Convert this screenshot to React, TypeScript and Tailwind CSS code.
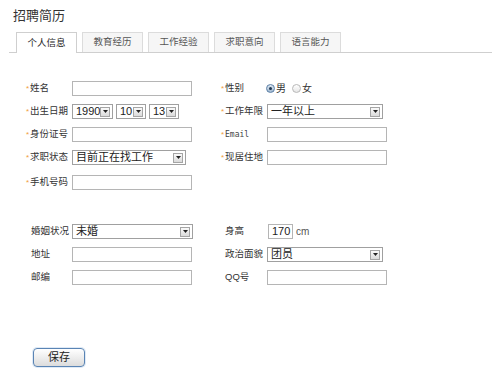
import React from "react";

const font = `font-["Liberation_Sans","Noto_Sans_CJK_SC",sans-serif]`;

const Star = ({ show = true }: { show?: boolean }) => (
  <span
    className={`w-[4px] text-[8px] leading-none text-[#f0a040] ${show ? "" : "invisible"}`}
  >
    *
  </span>
);

const Label = ({
  text,
  star = true,
  width,
  small = false,
}: {
  text: string;
  star?: boolean;
  width: string;
  small?: boolean;
}) => (
  <div className={`flex items-center shrink-0 ${width}`}>
    <Star show={star} />
    <span
      className={
        small
          ? `text-[8px] text-[#444] font-["DejaVu_Sans_Mono",monospace]`
          : "text-[9.5px] text-[#333]"
      }
    >
      {text}
    </span>
  </div>
);

const TextInput = ({ width = "w-[120px]", value }: { width?: string; value?: string }) => (
  <div
    className={`${width} h-[15px] border border-[#b5b5b5] bg-white text-[11px] leading-[13px] pl-[3px] text-[#222]`}
  >
    {value}
  </div>
);

const Select = ({ width, value }: { width: string; value: string }) => (
  <div
    className={`${width} h-[15px] border border-[#a0a0a0] bg-white flex items-center justify-between pl-[3px] pr-[2px]`}
  >
    <span className="text-[11px] leading-none text-[#222]">{value}</span>
    <span className="w-[10px] h-[10px] border border-[#a5a5a5] bg-gradient-to-b from-[#fafafa] to-[#dadada] flex items-center justify-center">
      <svg width="5" height="3" viewBox="0 0 5 3">
        <path d="M0 0h5L2.5 3z" fill="#222" />
      </svg>
    </span>
  </div>
);

const Radio = ({ checked }: { checked?: boolean }) => (
  <span
    className={`w-[9px] h-[9px] rounded-full border flex items-center justify-center ${
      checked
        ? "border-[#5b7fa6] bg-gradient-to-b from-[#dfe9f3] to-[#9fb7cf]"
        : "border-[#b8b8b8] bg-gradient-to-b from-[#ffffff] to-[#e6e6e6]"
    }`}
  >
    {checked && <span className="w-[3px] h-[3px] rounded-full bg-[#1f3550]" />}
  </span>
);

const tabs = ["个人信息", "教育经历", "工作经验", "求职意向", "语言能力"];

export default function App() {
  return (
    <div className={`w-[492px] h-[370px] bg-white overflow-hidden ${font}`}>
      {/* Title */}
      <div className="pt-[8px] pl-[13px] h-[24px] text-[13px] leading-[15px] text-[#333]">
        招聘简历
      </div>

      {/* Tabs */}
      <div className="mt-[8px] ml-[9px] h-[21px] border-b border-[#cfcfcf] flex items-end gap-[5px] pl-[7px]">
        {tabs.map((t, i) => (
          <div
            key={t}
            className={`w-[61px] h-[20px] border border-b-0 flex items-center justify-center text-[9.5px] ${
              i === 0
                ? "border-[#cfcfcf] bg-white text-[#222] h-[21px] mb-[-1px]"
                : "border-[#dcdcdc] bg-[#f6f6f6] text-[#555]"
            }`}
          >
            {t}
          </div>
        ))}
      </div>

      {/* Required fields */}
      <div className="mt-[24px] pl-[26px] flex flex-col">
        <div className="flex items-center h-[23px]">
          <div className="w-[195px] flex items-center">
            <Label text="姓名" width="w-[46px]" />
            <TextInput />
          </div>
          <div className="flex items-center">
            <Label text="性别" width="w-[45px]" />
            <div className="flex items-center gap-[1px] text-[10px] text-[#333]">
              <Radio checked />
              <span className="mr-[5px]">男</span>
              <Radio />
              <span>女</span>
            </div>
          </div>
        </div>

        <div className="flex items-center h-[23px]">
          <div className="w-[195px] flex items-center">
            <Label text="出生日期" width="w-[46px]" />
            <div className="flex items-center gap-[3px]">
              <Select width="w-[41px]" value="1990" />
              <Select width="w-[30px]" value="10" />
              <Select width="w-[30px]" value="13" />
            </div>
          </div>
          <div className="flex items-center">
            <Label text="工作年限" width="w-[46px]" />
            <Select width="w-[116px]" value="一年以上" />
          </div>
        </div>

        <div className="flex items-center h-[23px]">
          <div className="w-[195px] flex items-center">
            <Label text="身份证号" width="w-[46px]" />
            <TextInput />
          </div>
          <div className="flex items-center">
            <Label text="Email" width="w-[46px]" small />
            <TextInput />
          </div>
        </div>

        <div className="flex items-center h-[23px]">
          <div className="w-[195px] flex items-center">
            <Label text="求职状态" width="w-[46px]" />
            <Select width="w-[114px]" value="目前正在找工作" />
          </div>
          <div className="flex items-center">
            <Label text="现居住地" width="w-[46px]" />
            <TextInput />
          </div>
        </div>

        <div className="flex items-center h-[23px] mt-[2px]">
          <div className="w-[195px] flex items-center">
            <Label text="手机号码" width="w-[46px]" />
            <TextInput />
          </div>
        </div>
      </div>

      {/* Optional fields */}
      <div className="mt-[26px] pl-[27px] flex flex-col">
        <div className="flex items-center h-[23px]">
          <div className="w-[194px] flex items-center">
            <Label text="婚姻状况" star={false} width="w-[45px]" />
            <Select width="w-[121px]" value="未婚" />
          </div>
          <div className="flex items-center">
            <Label text="身高" star={false} width="w-[47px]" />
            <TextInput width="w-[25px]" value="170" />
            <span className="ml-[3px] text-[10px] text-[#555]">cm</span>
          </div>
        </div>

        <div className="flex items-center h-[23px]">
          <div className="w-[194px] flex items-center">
            <Label text="地址" star={false} width="w-[45px]" />
            <TextInput />
          </div>
          <div className="flex items-center">
            <Label text="政治面貌" star={false} width="w-[46px]" />
            <Select width="w-[116px]" value="团员" />
          </div>
        </div>

        <div className="flex items-center h-[22px]">
          <div className="w-[194px] flex items-center">
            <Label text="邮编" star={false} width="w-[45px]" />
            <TextInput />
          </div>
          <div className="flex items-center">
            <Label text="QQ号" star={false} width="w-[46px]" />
            <TextInput />
          </div>
        </div>
      </div>

      {/* Save */}
      <div className="mt-[56px] ml-[33px]">
        <button className="w-[52px] h-[19px] rounded-[4px] border border-[#5a84b4] bg-gradient-to-b from-[#ffffff] to-[#dcdcdc] text-[11px] leading-none text-[#222] shadow-[0_0_0_1px_#dfeaf6]">
          保存
        </button>
      </div>
    </div>
  );
}
